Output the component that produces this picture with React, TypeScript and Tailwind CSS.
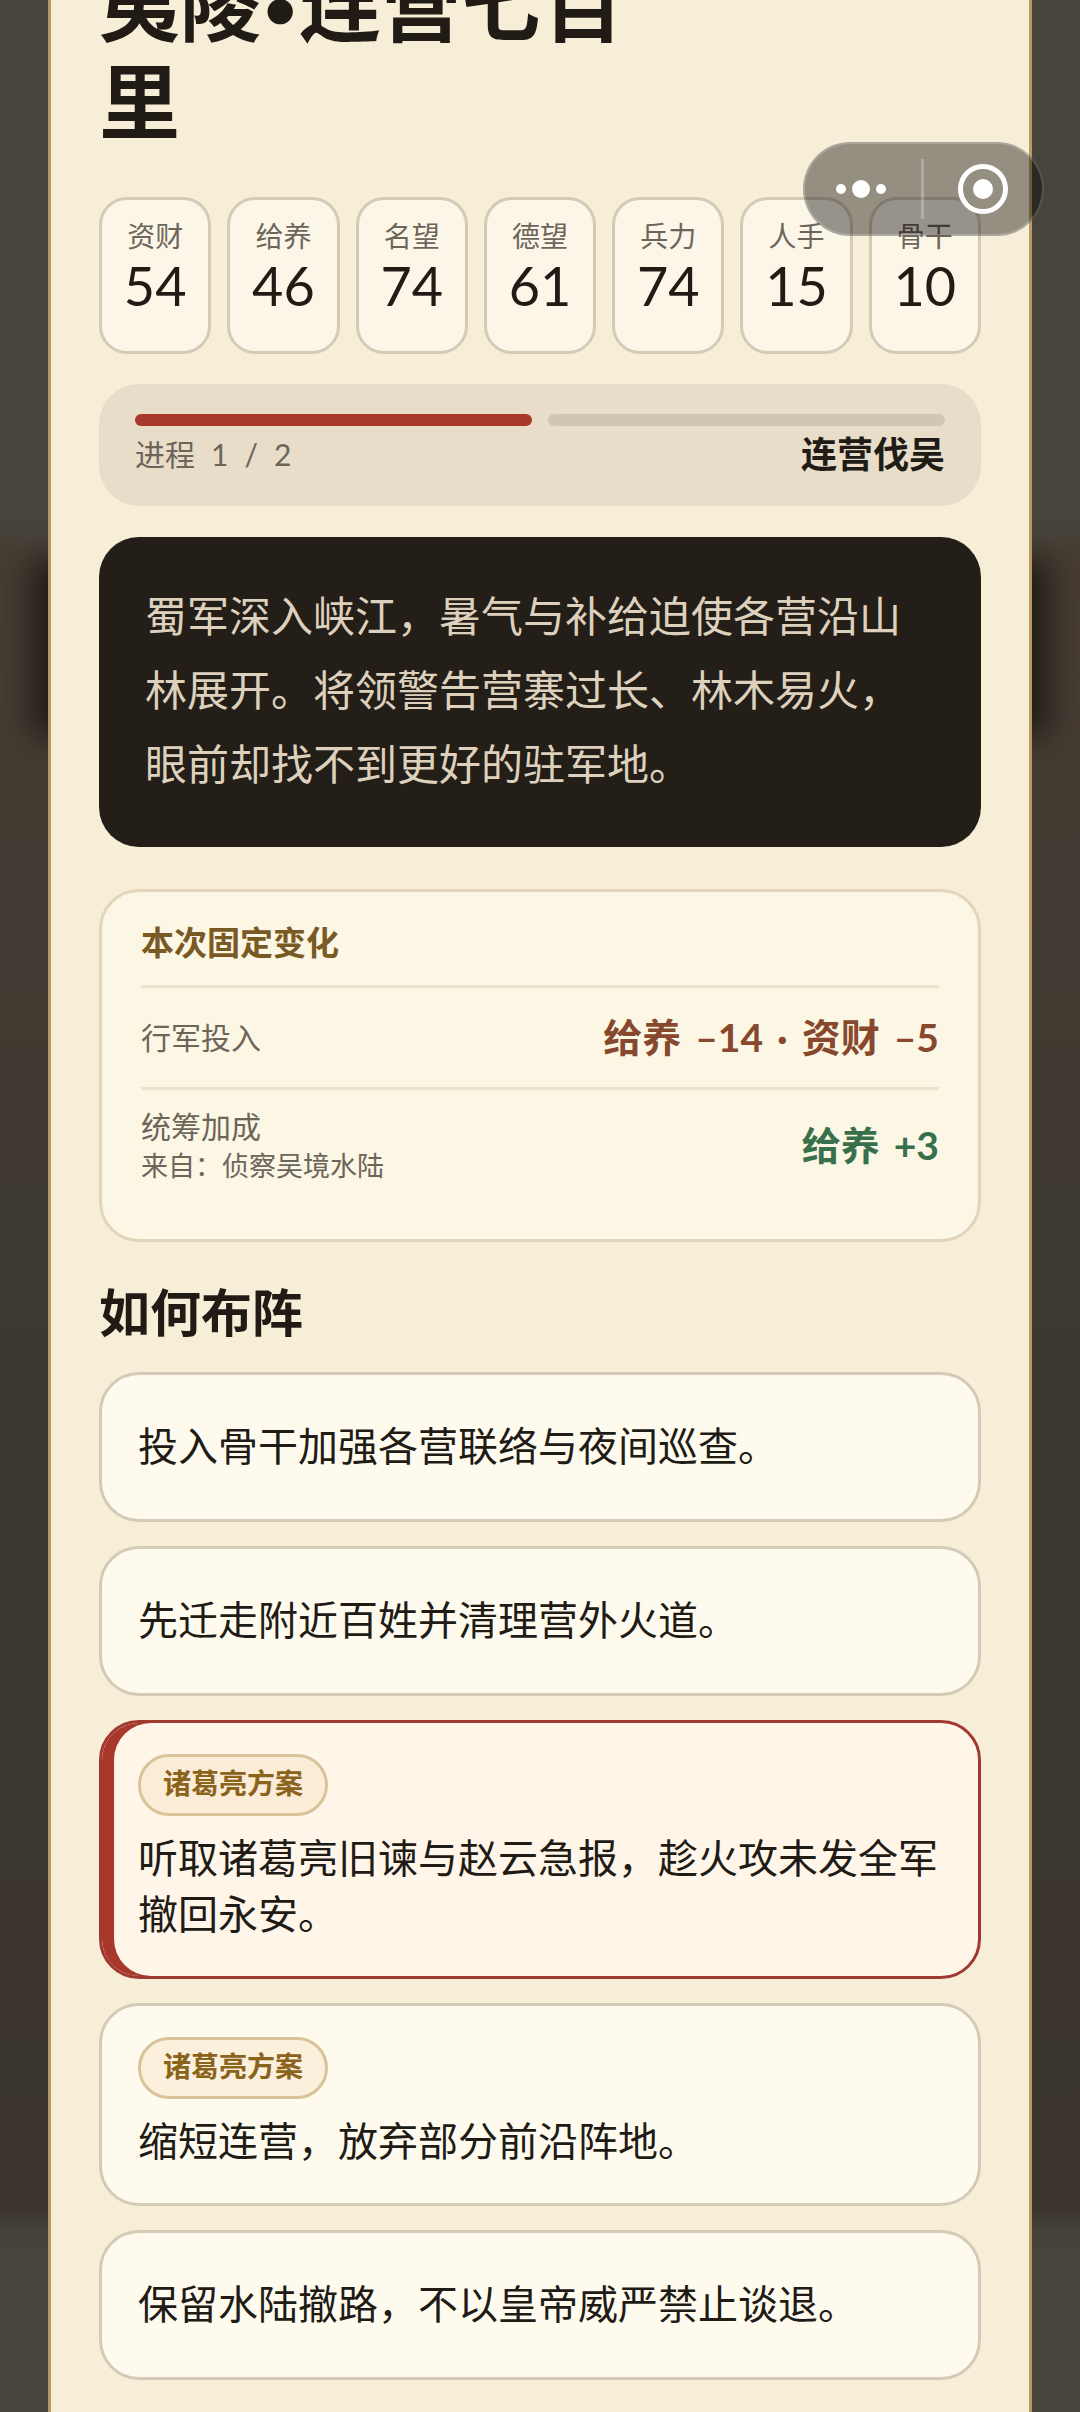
import { clsx } from "clsx";

type Stat = { label: string; value: number };

type Amount = { label: string; value: string };

type Option = {
  text: string;
  tag?: string;
  selected?: boolean;
};

const stats: Stat[] = [
  { label: "资财", value: 54 },
  { label: "给养", value: 46 },
  { label: "名望", value: 74 },
  { label: "德望", value: 61 },
  { label: "兵力", value: 74 },
  { label: "人手", value: 15 },
  { label: "骨干", value: 10 },
];

const costs: Amount[] = [
  { label: "给养", value: "–14" },
  { label: "资财", value: "–5" },
];

const bonuses: Amount[] = [{ label: "给养", value: "+3" }];

const options: Option[] = [
  { text: "投入骨干加强各营联络与夜间巡查。" },
  { text: "先迁走附近百姓并清理营外火道。" },
  {
    text: "听取诸葛亮旧谏与赵云急报，趁火攻未发全军撤回永安。",
    tag: "诸葛亮方案",
    selected: true,
  },
  { text: "缩短连营，放弃部分前沿阵地。", tag: "诸葛亮方案" },
  { text: "保留水陆撤路，不以皇帝威严禁止谈退。" },
];

function StatCard({ label, value }: Stat) {
  return (
    <div className="flex min-w-0 flex-1 flex-col items-center rounded-[28px] border-3 border-[#d4cbb6] bg-[#fcf6e8] pt-[18px] pb-[34px]">
      <dt className="text-[28px] leading-9 text-[#6c655a]">{label}</dt>
      <dd className="text-[54px] leading-[63px] text-[#211b15]">{value}</dd>
    </div>
  );
}

function Progress() {
  return (
    <section className="mt-[30px] rounded-[40px] bg-[#e7ddc8] px-9 pt-[30px] pb-6">
      <div className="flex gap-4">
        <span className="h-3 flex-1 rounded-full bg-[#a9382c]" />
        <span className="h-3 flex-1 rounded-full bg-[#d1c6b2]" />
      </div>
      <div className="flex h-14 items-center justify-between">
        <p className="flex gap-4 text-[30px] text-[#6c655a]">
          <span>进程</span> <span>1</span> <span>/</span> <span>2</span>
        </p>
        <strong className="text-[36px] font-bold text-[#211b15]">连营伐吴</strong>
      </div>
    </section>
  );
}

function Amounts({ items }: { items: Amount[] }) {
  return (
    <strong className="flex gap-[14px] text-[39px] font-bold">
      {items.map((item, i) => (
        <span key={item.label} className="flex gap-[14px]">
          {i > 0 && <span>·</span>} <span>{item.label}</span> <span>{item.value}</span>
        </span>
      ))}
    </strong>
  );
}

function Changes() {
  return (
    <section className="mt-[42px] rounded-[40px] border-3 border-[#e1d5bb] bg-[#fcf6e5] px-[39px] pt-[26px] pb-[38px]">
      <h3 className="text-[33px] leading-[48px] font-bold text-[#7a5a24]">本次固定变化</h3>
      <div className="mt-[19px] flex h-[102px] items-center justify-between border-t-3 border-[#ebe3d0] text-[#87482d]">
        <span className="text-[30px] text-[#6c655a]">行军投入</span>
        <Amounts items={costs} />
      </div>
      <div className="flex h-[114px] items-center justify-between border-t-3 border-[#ebe3d0] text-[#38704c]">
        <div className="flex flex-col text-[#6c655a]">
          <span className="text-[30px] leading-10">统筹加成</span>
          <span className="text-[27px] leading-10">来自：侦察吴境水陆</span>
        </div>
        <Amounts items={bonuses} />
      </div>
    </section>
  );
}

function OptionCard({ text, tag, selected }: Option) {
  return (
    <button
      type="button"
      aria-pressed={!!selected}
      className={clsx(
        "flex min-h-[150px] w-full flex-col items-start justify-center gap-[14px] rounded-[40px] border-3 px-9 pt-[31px] pb-[34px] text-left",
        selected
          ? "border-[#a03a30] bg-[#fff5e9] shadow-[inset_12px_0_0_#a9382c]"
          : "border-[#d4cbb6] bg-[#fffaee]",
      )}
    >
      {tag && (
        <span
          className={clsx(
            "rounded-full border-3 border-[#d8c39a] px-[22px] pt-1 pb-2 text-[28px] leading-[44px] font-bold text-[#8a631c]",
            selected ? "bg-[#fbecd8]" : "bg-[#faf0db]",
          )}
        >
          {tag}
        </span>
      )}
      <span className="text-[40px] leading-[56px] text-[#211b15]">{text}</span>
    </button>
  );
}

function Capsule() {
  return (
    <div className="absolute top-[142px] right-9 flex h-[94px] w-[241px] items-center rounded-full border-2 border-white/20 bg-black/40">
      <button type="button" aria-label="更多" className="flex w-[116px] justify-center pr-1">
        <svg width="52" height="20" viewBox="0 0 52 20" fill="#fff">
          <circle cx="6" cy="10" r="5" />
          <circle cx="26" cy="10" r="9" />
          <circle cx="46" cy="10" r="5" />
        </svg>
      </button>
      <span className="h-15 w-[3px] bg-white/25" />
      <button type="button" aria-label="关闭" className="flex flex-1 justify-center">
        <svg width="50" height="50" viewBox="0 0 50 50">
          <circle cx="25" cy="25" r="22.5" fill="none" stroke="#fff" strokeWidth="5" />
          <circle cx="25" cy="25" r="10" fill="#fff" />
        </svg>
      </button>
    </div>
  );
}

// dimmed page behind the dialog
function Backdrop() {
  return (
    <div className="absolute inset-0 overflow-hidden bg-[#48443b]">
      <div className="absolute -inset-x-10 top-[545px] h-[1675px] bg-linear-to-b from-[#463c33] via-[#3c3830] to-[#3a342c] blur-md" />
      <div className="absolute inset-x-8 top-[560px] h-[175px] bg-[#1f1a14] blur-lg" />
    </div>
  );
}

export default function App() {
  return (
    <div className="relative flow-root min-h-screen overflow-hidden font-[Lato,'Noto_Sans_CJK_SC',sans-serif]">
      <Backdrop />
      <main className="relative mx-12 flow-root min-h-screen border-x-3 border-[#b89a62] bg-[#f7eed8] px-12 pb-7">
        <h1 className="-mt-[42px] max-w-[600px] font-[Inter,'Noto_Sans_CJK_SC',sans-serif] text-[81px] leading-[97px] font-bold text-[#211b15]">
          夷陵•连营七百里
        </h1>
        <dl className="mt-[45px] flex gap-4">
          {stats.map((stat) => (
            <StatCard key={stat.label} {...stat} />
          ))}
        </dl>
        <Progress />
        <p className="mt-[31px] rounded-[40px] bg-[#241e18] px-[46px] pt-[42px] pb-[46px] text-[42px] leading-[74px] text-[#ddd1bd]">
          蜀军深入峡江，暑气与补给迫使各营沿山林展开。将领警告营寨过长、林木易火，眼前却找不到更好的驻军地。
        </p>
        <Changes />
        <h2 className="mt-9 text-[51px] leading-[70px] font-bold text-[#211b15]">如何布阵</h2>
        <div className="mt-6 flex flex-col gap-6">
          {options.map((option) => (
            <OptionCard key={option.text} {...option} />
          ))}
        </div>
      </main>
      <Capsule />
    </div>
  );
}
